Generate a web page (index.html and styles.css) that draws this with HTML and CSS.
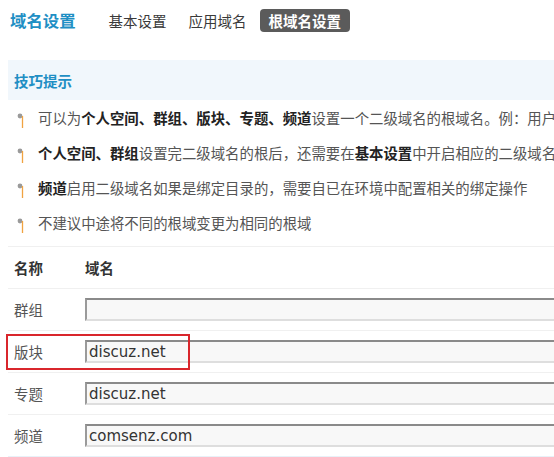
FILE: index.html
```html
<!DOCTYPE html>
<html lang="zh-CN">
<head>
<meta charset="utf-8">
<title>根域名设置</title>
<link rel="stylesheet" href="styles.css">
</head>
<body>
<div class="page">
  <div class="nav">
    <h1 class="title">域名设置</h1>
    <a class="tab tab-first">基本设置</a>
    <a class="tab tab-second">应用域名</a>
    <a class="tab tab-active">根域名设置</a>
  </div>

  <div class="tips">
    <span class="tips-title">技巧提示</span>
  </div>
  <ul class="tip-list">
    <li><svg class="pin" width="10" height="18" viewBox="0 0 10 18"><circle cx="3" cy="4" r="2.4" fill="#9a9a9a"/><line x1="5.5" y1="4" x2="5.5" y2="16" stroke="#f0a341" stroke-width="1.3"/></svg><span>可以为<b>个人空间、群组、版块、专题、频道</b>设置一个二级域名的根域名。例：用户</span></li>
    <li><svg class="pin" width="10" height="18" viewBox="0 0 10 18"><circle cx="3" cy="4" r="2.4" fill="#9a9a9a"/><line x1="5.5" y1="4" x2="5.5" y2="16" stroke="#f0a341" stroke-width="1.3"/></svg><span><b>个人空间、群组</b>设置完二级域名的根后，还需要在<b>基本设置</b>中开启相应的二级域名</span></li>
    <li><svg class="pin" width="10" height="18" viewBox="0 0 10 18"><circle cx="3" cy="4" r="2.4" fill="#9a9a9a"/><line x1="5.5" y1="4" x2="5.5" y2="16" stroke="#f0a341" stroke-width="1.3"/></svg><span><b>频道</b>启用二级域名如果是绑定目录的，需要自已在环境中配置相关的绑定操作</span></li>
    <li><svg class="pin" width="10" height="18" viewBox="0 0 10 18"><circle cx="3" cy="4" r="2.4" fill="#9a9a9a"/><line x1="5.5" y1="4" x2="5.5" y2="16" stroke="#f0a341" stroke-width="1.3"/></svg><span>不建议中途将不同的根域变更为相同的根域</span></li>
  </ul>

  <div class="table">
    <div class="row row-head">
      <div class="cell-name">名称</div>
      <div class="cell-domain">域名</div>
    </div>
    <div class="row">
      <div class="cell-name">群组</div>
      <div class="cell-domain"><input class="field" type="text" value=""></div>
    </div>
    <div class="row row-marked">
      <div class="cell-name">版块</div>
      <div class="cell-domain"><input class="field" type="text" value="discuz.net"></div>
      <div class="mark"></div>
    </div>
    <div class="row">
      <div class="cell-name">专题</div>
      <div class="cell-domain"><input class="field" type="text" value="discuz.net"></div>
    </div>
    <div class="row row-last">
      <div class="cell-name">频道</div>
      <div class="cell-domain"><input class="field" type="text" value="comsenz.com"></div>
    </div>
  </div>
</div>
</body>
</html>
```

FILE: styles.css
```css
html, body {
  margin: 0;
  padding: 0;
  background: #ffffff;
}

body {
  width: 554px;
  height: 457px;
  overflow: hidden;
  font-family: "Noto Sans CJK SC", "DejaVu Sans", sans-serif;
  color: #444;
}

.page {
  width: 554px;
}

.nav {
  display: flex;
  align-items: center;
  height: 24px;
  padding: 8px 0 0 10px;
}

.title {
  margin: 0;
  font-size: 16.4px;
  font-weight: bold;
  color: #1f8fc4;
  line-height: 24px;
}

.tab {
  font-size: 14.5px;
  line-height: 23px;
  color: #3a3a3a;
  text-decoration: none;
}

.tab-first {
  margin-left: 33px;
}

.tab-second {
  margin-left: 22px;
}

.tab-active {
  margin-left: 13px;
  padding: 0 9px;
  background: #5b5b5b;
  color: #ffffff;
  font-weight: bold;
  border-radius: 4px;
}

.tips {
  margin: 28px 0 0 8px;
  height: 40px;
  background: #f1f7fc;
  display: flex;
  align-items: center;
  padding-left: 6px;
}

.tips-title {
  font-size: 14.5px;
  font-weight: bold;
  color: #1f8fc4;
}

.tip-list {
  list-style: none;
  margin: 0;
  padding: 0 0 0 17px;
}

.tip-list li {
  display: flex;
  align-items: center;
  height: 35px;
  font-size: 14.4px;
  white-space: nowrap;
  color: #555;
}

.tip-list b {
  color: #222;
}

.pin {
  flex: none;
  margin: 6px 11px 0 0;
}

.table {
  margin: 6px 0 0 8px;
}

.row {
  position: relative;
  display: flex;
  align-items: center;
  height: 41px;
  border-top: 1px solid #f0f0f0;
  font-size: 14.4px;
}

.row-last {
  border-bottom: 1px solid #e8f1f8;
}

.row-head .cell-name,
.row-head .cell-domain {
  font-weight: bold;
  color: #333;
}

.cell-name {
  width: 71px;
  padding-left: 6px;
  color: #555;
}

.cell-domain {
  flex: 1;
  min-width: 0;
}

.field {
  display: block;
  box-sizing: border-box;
  width: 520px;
  height: 23px;
  margin: 0;
  padding: 0 0 0 2px;
  border: 1px solid #dcdcdc;
  border-top: 2px solid #8a8a8a;
  border-left: 2px solid #9a9a9a;
  border-bottom: 2px solid #dedede;
  background: #f8f8f8;
  font-family: "DejaVu Sans", sans-serif;
  font-size: 15px;
  color: #333;
  outline: none;
}

.mark {
  position: absolute;
  left: -2px;
  top: 3px;
  width: 180px;
  height: 32px;
  border: 2px solid #d9262c;
}
```
